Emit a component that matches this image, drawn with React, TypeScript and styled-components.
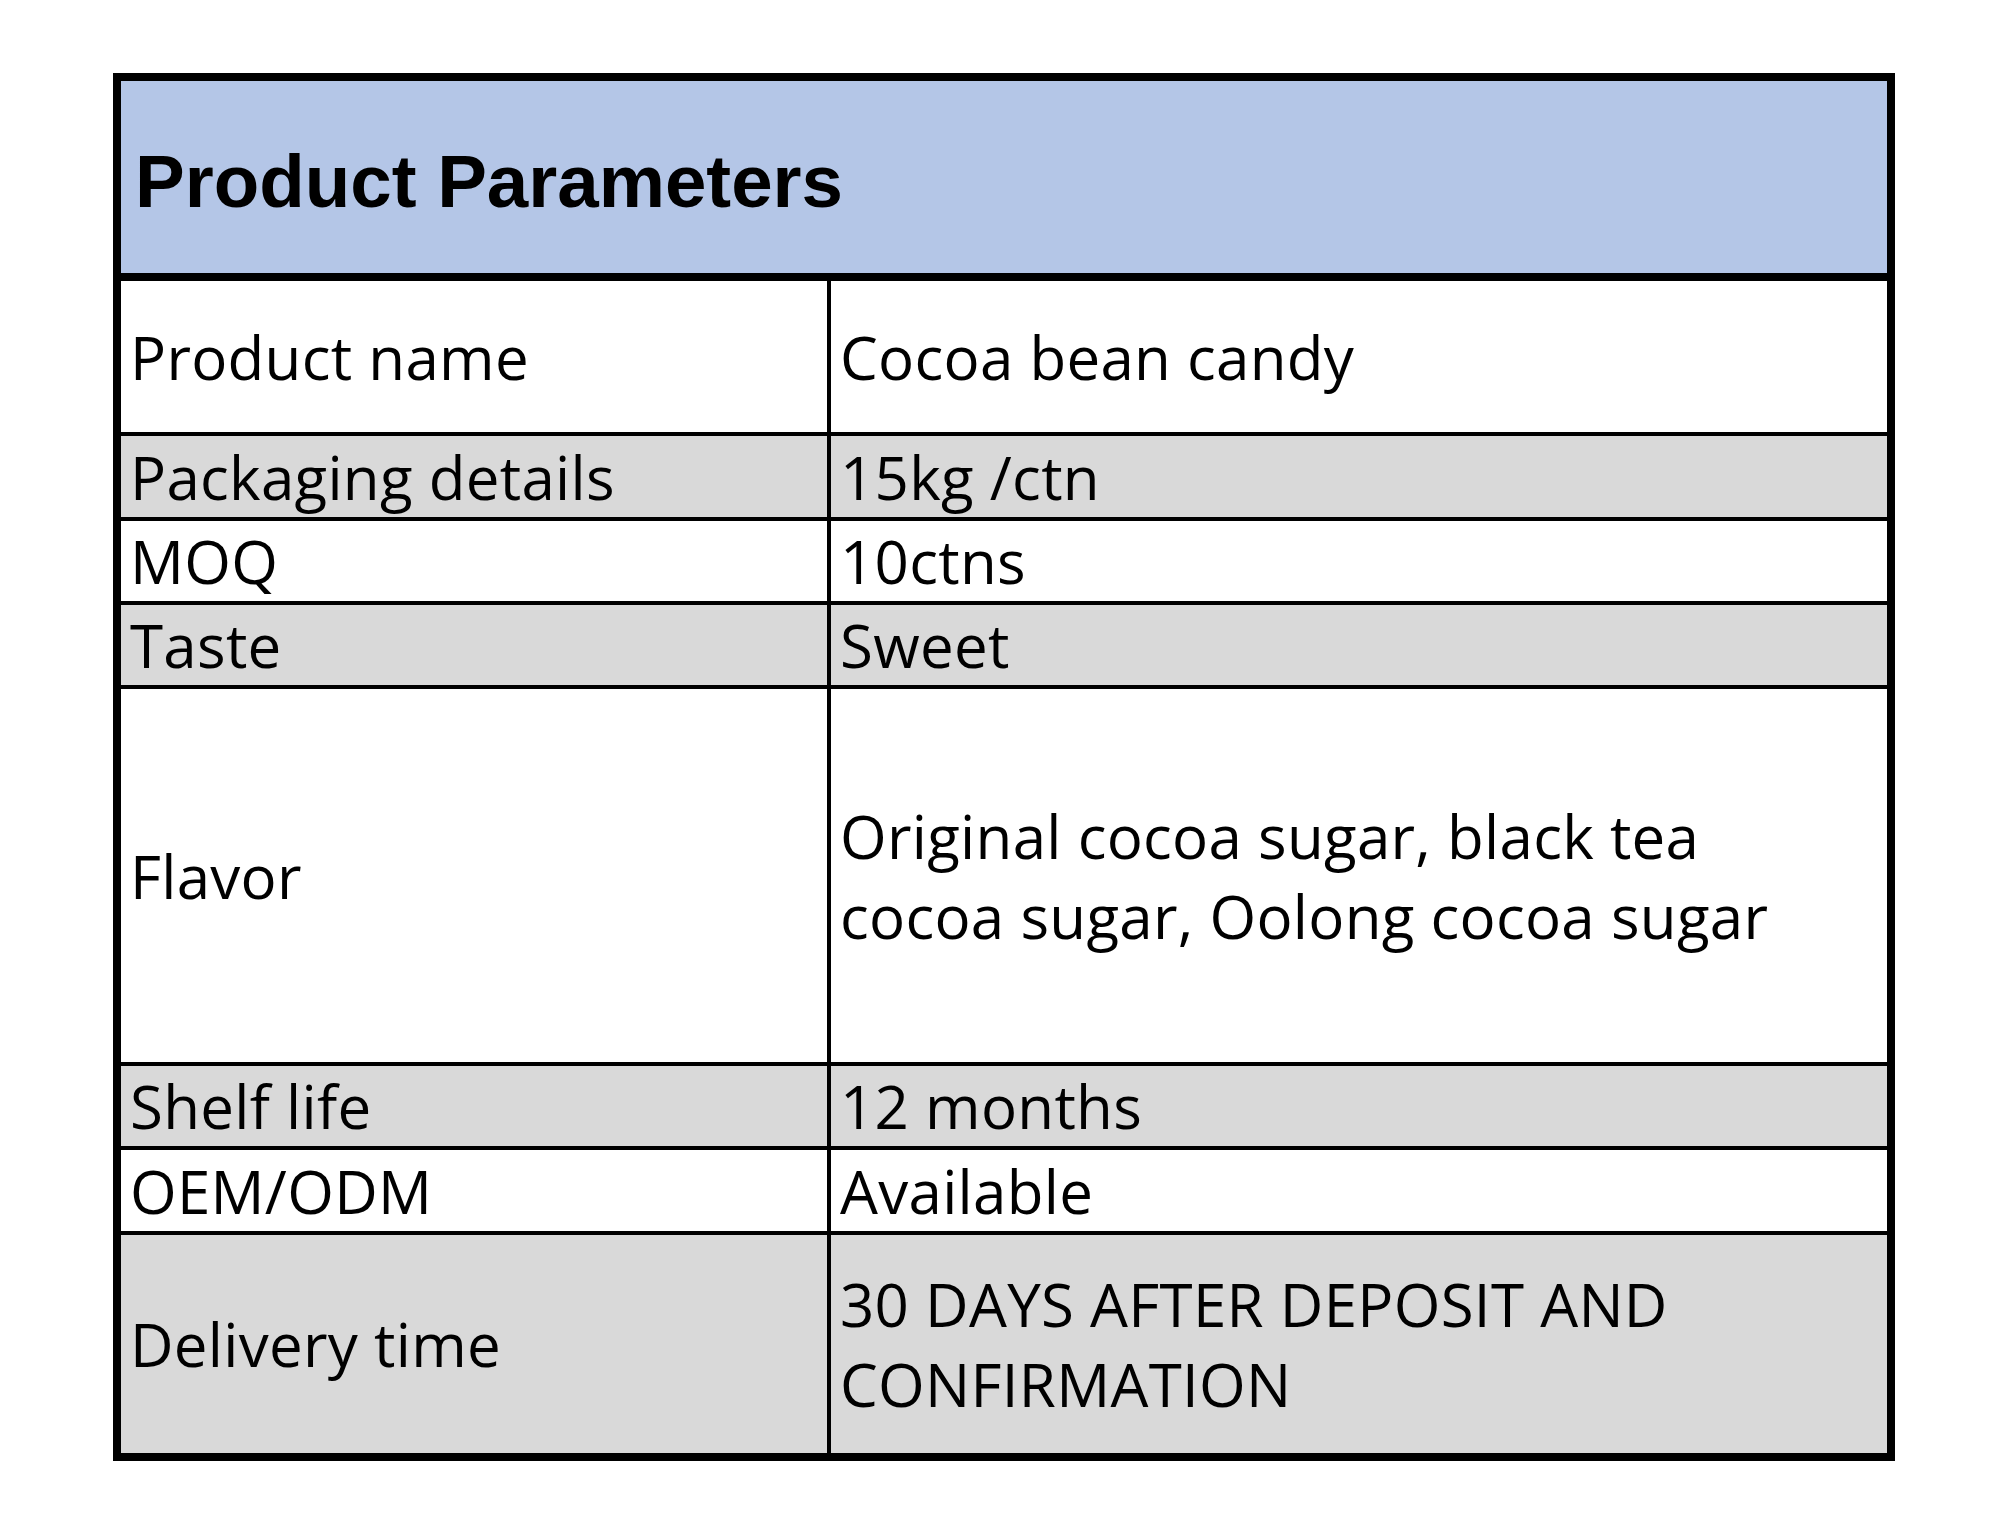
import React from 'react'
import styled, { createGlobalStyle } from 'styled-components'

const GlobalStyle = createGlobalStyle`
  html, body {
    margin: 0;
    padding: 0;
    background: #ffffff;
  }
  * {
    box-sizing: border-box;
  }
`

type Param = {
  label: string
  value: React.ReactNode
  height: number
  shaded?: boolean
}

const params: Param[] = [
  { label: 'Product name', value: 'Cocoa bean candy', height: 151 },
  { label: 'Packaging details', value: '15kg /ctn', height: 85, shaded: true },
  { label: 'MOQ', value: '10ctns', height: 84 },
  { label: 'Taste', value: 'Sweet', height: 84, shaded: true },
  {
    label: 'Flavor',
    value: 'Original cocoa sugar, black tea cocoa sugar, Oolong cocoa sugar',
    height: 377,
  },
  { label: 'Shelf life', value: '12 months', height: 84, shaded: true },
  { label: 'OEM/ODM', value: 'Available', height: 85 },
  {
    label: 'Delivery time',
    value: '30 DAYS AFTER DEPOSIT AND CONFIRMATION',
    height: 222,
    shaded: true,
  },
]

const App: React.FC = () => {
  return (
    <Page>
      <GlobalStyle />
      <Table>
        <Header>
          <Title>Product Parameters</Title>
        </Header>
        {params.map((p, i) => (
          <Row key={p.label} $height={p.height} $shaded={p.shaded} $first={i === 0}>
            <Label>{p.label}</Label>
            <Value>{p.value}</Value>
          </Row>
        ))}
      </Table>
    </Page>
  )
}

const Page = styled.div`
  padding: 73px 0 0 113px;
  width: 2008px;
  min-height: 1535px;
`

const Table = styled.div`
  width: 1782px;
  border: 8px solid #000000;
  display: flex;
  flex-direction: column;
`

const Header = styled.div`
  height: 200px;
  background: #b4c6e7;
  border-bottom: 8px solid #000000;
  display: flex;
  align-items: center;
  padding: 8px 0 0 14px;
`

const Title = styled.h1`
  margin: 0;
  font-family: 'Liberation Sans', Arial, sans-serif;
  font-weight: 700;
  font-size: 74.5px;
  color: #000000;
`

const Row = styled.div<{ $height: number; $shaded?: boolean; $first?: boolean }>`
  display: grid;
  grid-template-columns: 710px 1fr;
  height: ${(p) => p.$height}px;
  background: ${(p) => (p.$shaded ? '#d9d9d9' : '#ffffff')};
  border-top: ${(p) => (p.$first ? 'none' : '4px solid #000000')};
  font-family: 'Open Sans', 'Noto Sans', sans-serif;
  font-size: 60px;
  line-height: 80px;
  letter-spacing: 0.3px;
  color: #000000;
`

const Label = styled.div`
  display: flex;
  align-items: center;
  padding-left: 9px;
  border-right: 4px solid #000000;
`

const Value = styled.div`
  display: flex;
  align-items: center;
  padding: 0 60px 0 9px;
`

export default App
